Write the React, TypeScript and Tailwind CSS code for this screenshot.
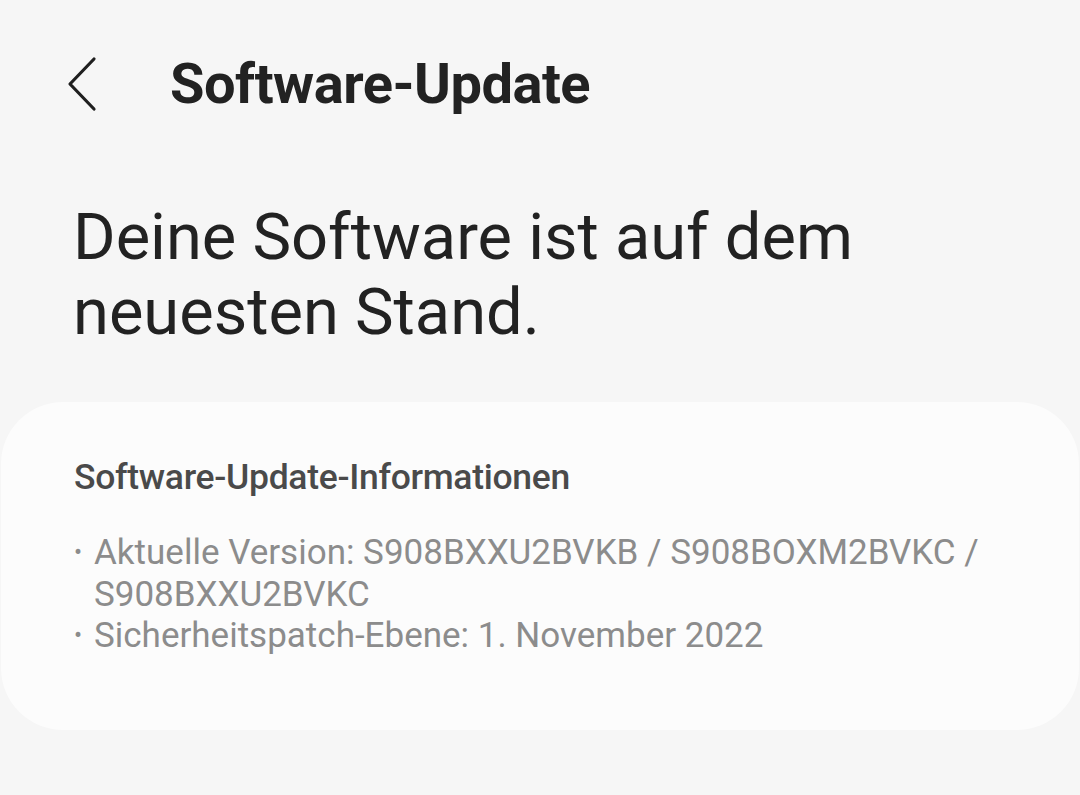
import React from 'react';

const BackIcon: React.FC = () => (
    <svg width="36" height="56" viewBox="0 0 36 56" fill="none" className="shrink-0">
        <path d="M30 3 L6 28 L30 53" stroke="#1f1f1f" strokeWidth="3.2" strokeLinecap="round" strokeLinejoin="round" />
    </svg>
);

export default function App() {
    return (
        <div
            className="w-[1080px] h-[795px] overflow-hidden bg-[#f6f6f6] text-[#1f1f1f]"
            style={{ fontFamily: 'Roboto, "Noto Sans", sans-serif' }}
        >
            {/* Header */}
            <div className="flex items-center h-[170px] pl-[64px] pb-[2px]">
                <BackIcon />
                <h1 className="ml-[70px] text-[56px] font-bold tracking-[-0.5px] text-[#222]">Software-Update</h1>
            </div>

            {/* Status */}
            <p className="px-[73px] pt-[30px] text-[65px] leading-[75px] text-[#222]">
                Deine Software ist auf dem
                <br />
                neuesten Stand.
            </p>

            {/* Info card */}
            <div className="mt-[52px] mx-[1px] h-[328px] rounded-[62px] bg-[#fcfcfc] px-[73px] pt-[55px]">
                <h2 className="text-[35.5px] leading-[40px] font-medium text-[#4a4a4a] tracking-[-0.3px]">
                    Software-Update-Informationen
                </h2>
                <ul className="mt-[35px] text-[35px] leading-[41.5px] text-[#8c8c8c]">
                    <li className="flex">
                        <span className="w-[20px] shrink-0 text-[24px]">•</span>
                        <span>Aktuelle Version: S908BXXU2BVKB / S908BOXM2BVKC / S908BXXU2BVKC</span>
                    </li>
                    <li className="flex">
                        <span className="w-[20px] shrink-0 text-[24px]">•</span>
                        <span>Sicherheitspatch-Ebene: 1. November 2022</span>
                    </li>
                </ul>
            </div>
        </div>
    );
}
